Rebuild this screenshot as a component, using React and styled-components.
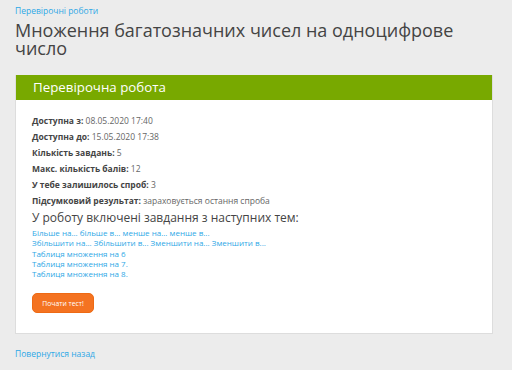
import React from 'react'
import styled, { createGlobalStyle } from 'styled-components'

const GlobalStyle = createGlobalStyle`
  html, body {
    margin: 0;
    padding: 0;
    background: #ececec;
    font-family: "Open Sans", "Noto Sans", sans-serif;
  }
`

const Page = styled.div`
  width: 478px;
  padding: 5px 19px 0 15px;
`

const Link = styled.a`
  display: block;
  color: #2ea8e6;
  font-size: ${props => props.size || 9.5}px;
  line-height: ${props => props.lh || 12}px;
  text-decoration: none;
  white-space: nowrap;
  cursor: pointer;
`

const Title = styled.h1`
  margin: 4px 0 0;
  color: #444;
  font-size: 18px;
  font-weight: 400;
  line-height: 18px;
`

const Card = styled.div`
  margin-top: 18px;
  background: #fff;
  border: 1px solid #ddd;
  border-top: 0;
`

const CardHeader = styled.div`
  height: 25px;
  padding-left: 17px;
  background: #78a900;
  color: #fff;
  font-size: 13.3px;
  line-height: 25px;
`

const CardBody = styled.div`
  padding: 13px 16px 20px;
`

const InfoRow = styled.div`
  color: #666;
  font-size: 8.5px;
  line-height: 16px;

  b {
    color: #444;
    font-weight: 700;
  }
`

const TopicsTitle = styled.h2`
  margin: 1px 0 2px;
  color: #444;
  font-size: 12px;
  font-weight: 400;
  line-height: 16px;
`

const Button = styled.button`
  display: block;
  margin-top: 14px;
  width: 62px;
  height: 20px;
  padding: 0;
  background: #f47321;
  border: 1px solid #ee6a14;
  border-radius: 5px;
  color: #fff;
  font-family: inherit;
  font-size: 6.8px;
  cursor: pointer;
`

const BackLink = styled(Link)`
  margin-top: 14px;
`

const info = [
  ['Доступна з:', '08.05.2020 17:40'],
  ['Доступна до:', '15.05.2020 17:38'],
  ['Кількість завдань:', '5'],
  ['Макс. кількість балів:', '12'],
  ['У тебе залишилось спроб:', '3'],
  ['Підсумковий результат:', 'зараховується остання спроба'],
]

const topics = [
  'Більше на... більше в... менше на... менше в...',
  'Збільшити на... Збільшити в... Зменшити на... Зменшити в...',
  'Таблиця множення на 6',
  'Таблиця множення на 7.',
  'Таблиця множення на 8.',
]

export default function App() {
  return (
    <Page>
      <GlobalStyle />
      <Link size={8.5}>Перевірочні роботи</Link>
      <Title>Множення багатозначних чисел на одноцифрове число</Title>
      <Card>
        <CardHeader>Перевірочна робота</CardHeader>
        <CardBody>
          {info.map(([label, value]) => (
            <InfoRow key={label}>
              <b>{label}</b> {value}
            </InfoRow>
          ))}
          <TopicsTitle>У роботу включені завдання з наступних тем:</TopicsTitle>
          {topics.map(t => (
            <Link key={t} size={8} lh={10.3}>{t}</Link>
          ))}
          <Button>Почати тест!</Button>
        </CardBody>
      </Card>
      <BackLink size={8.5}>Повернутися назад</BackLink>
    </Page>
  )
}
